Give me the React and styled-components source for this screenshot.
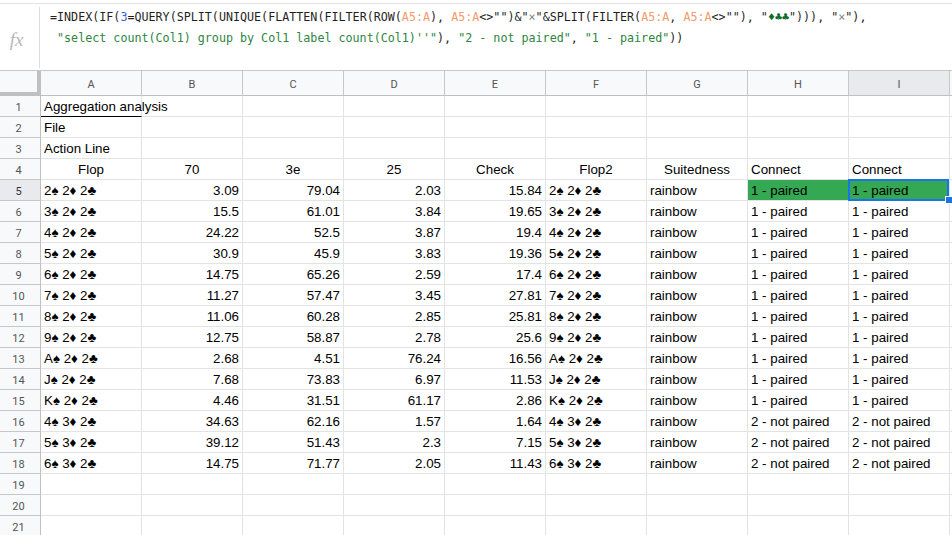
import React from "react";
import styled, { createGlobalStyle } from "styled-components";

const GlobalStyle = createGlobalStyle`
  html, body {
    margin: 0;
    padding: 0;
    background: #fff;
    overflow: hidden;
  }
  body {
    font-family: "Liberation Sans", Arial, sans-serif;
  }
`;

const Page = styled.div`
  width: 952px;
  height: 535px;
  overflow: hidden;
  display: flex;
  flex-direction: column;
  padding-top: 3px;
  box-sizing: border-box;
`;

const FormulaBar = styled.div`
  display: flex;
  height: 68px;
  box-sizing: border-box;
  border-top: 1px solid #e3e3e3;
  border-bottom: 1px solid #c7c7c7;
  flex-shrink: 0;
`;

const FxBox = styled.div`
  width: 40px;
  display: flex;
  align-items: center;
  justify-content: center;
  box-sizing: border-box;
  margin: 3px 0 2px;
  border-right: 1px solid #dadce0;
  font-family: "Liberation Serif", "DejaVu Serif", serif;
  font-style: italic;
  font-size: 19px;
  color: #b5b8bb;
  padding-right: 6px;
  padding-top: 4px;
`;

const FormulaText = styled.div`
  padding: 3px 0 0 10px;
  font-family: "DejaVu Sans Mono", "Liberation Mono", monospace;
  font-size: 11.7px;
  line-height: 21px;
  color: #1f1f1f;
  white-space: pre;
`;

const Tok = styled.span`
  color: ${(p) =>
    p.$kind === "range"
      ? "#f29a6a"
      : p.$kind === "num"
      ? "#3b5bdb"
      : p.$kind === "str"
      ? "#2e8540"
      : p.$kind === "sym"
      ? "#7a8a7e"
      : p.$kind === "suit"
      ? "#0d6b2a"
      : "inherit"};
`;

const Sheet = styled.div`
  display: grid;
  grid-template-columns: 41px repeat(9, 101px) 1fr;
  grid-auto-rows: 21px;
  grid-template-rows: 25px;
`;

const Corner = styled.div`
  background: #f8f9fa;
  box-sizing: border-box;
  border-right: 4px solid #c0c0c0;
  border-bottom: 4px solid #c0c0c0;
`;

const ColHead = styled.div`
  background: ${(p) => (p.$active ? "#e8eaed" : "#f8f9fa")};
  box-sizing: border-box;
  border-right: 1px solid #c7c7c7;
  border-bottom: 1px solid #c0c0c0;
  display: flex;
  align-items: center;
  justify-content: center;
  font-family: Roboto, "Liberation Sans", sans-serif;
  font-size: 11px;
  color: #555;
  padding-top: 2px;
`;

const RowHead = styled.div`
  background: ${(p) => (p.$active ? "#e8eaed" : "#f8f9fa")};
  box-sizing: border-box;
  border-right: 1px solid #c0c0c0;
  border-bottom: 1px solid #c7c7c7;
  display: flex;
  align-items: center;
  justify-content: center;
  font-family: Roboto, "Liberation Sans", sans-serif;
  font-size: 11px;
  color: ${(p) => (p.$active ? "#333" : "#555")};
  padding: 2px 3px 0 0;
`;

const Cell = styled.div`
  position: relative;
  z-index: ${(p) => (p.$spill ? 1 : "auto")};
  box-sizing: border-box;
  border-right: 1px solid #e2e3e3;
  border-bottom: 1px solid ${(p) => (p.$underline ? "#000" : "#e2e3e3")};
  background: ${(p) => p.$bg || "#fff"};
  padding: 1px 3px 0;
  font-size: 10pt;
  line-height: 20px;
  color: #000;
  white-space: nowrap;
  overflow: visible;
  text-align: ${(p) => p.$align || "left"};

  ${(p) =>
    p.$selected &&
    `
    &::after {
      content: "";
      position: absolute;
      top: -1px;
      left: -1px;
      right: 0;
      bottom: -1px;
      border: 2px solid #1a73e8;
      pointer-events: none;
    }
    &::before {
      content: "";
      position: absolute;
      right: -4px;
      bottom: -4px;
      width: 6px;
      height: 6px;
      background: #1a73e8;
      border: 1px solid #fff;
      z-index: 2;
    }
  `}
`;

const Edge = styled.div`
  box-sizing: border-box;
  border-bottom: 1px solid #e2e3e3;
  background: #fff;
`;

const HeadEdge = styled.div`
  background: #f8f9fa;
  border-bottom: 1px solid #c0c0c0;
`;

const cols = ["A", "B", "C", "D", "E", "F", "G", "H", "I"];

const flops = [
  ["2♠ 2♦ 2♣", "3.09", "79.04", "2.03", "15.84"],
  ["3♠ 2♦ 2♣", "15.5", "61.01", "3.84", "19.65"],
  ["4♠ 2♦ 2♣", "24.22", "52.5", "3.87", "19.4"],
  ["5♠ 2♦ 2♣", "30.9", "45.9", "3.83", "19.36"],
  ["6♠ 2♦ 2♣", "14.75", "65.26", "2.59", "17.4"],
  ["7♠ 2♦ 2♣", "11.27", "57.47", "3.45", "27.81"],
  ["8♠ 2♦ 2♣", "11.06", "60.28", "2.85", "25.81"],
  ["9♠ 2♦ 2♣", "12.75", "58.87", "2.78", "25.6"],
  ["A♠ 2♦ 2♣", "2.68", "4.51", "76.24", "16.56"],
  ["J♠ 2♦ 2♣", "7.68", "73.83", "6.97", "11.53"],
  ["K♠ 2♦ 2♣", "4.46", "31.51", "61.17", "2.86"],
  ["4♠ 3♦ 2♣", "34.63", "62.16", "1.57", "1.64"],
  ["5♠ 3♦ 2♣", "39.12", "51.43", "2.3", "7.15"],
  ["6♠ 3♦ 2♣", "14.75", "71.77", "2.05", "11.43"],
];

const buildRows = () => {
  const rows = [
    [{ v: "Aggregation analysis", underline: true, spill: true }],
    [{ v: "File" }],
    [{ v: "Action Line" }],
    [
      { v: "Flop", align: "center" },
      { v: "70", align: "center" },
      { v: "3e", align: "center" },
      { v: "25", align: "center" },
      { v: "Check", align: "center" },
      { v: "Flop2", align: "center" },
      { v: "Suitedness", align: "center" },
      { v: "Connect" },
      { v: "Connect" },
    ],
  ];
  flops.forEach((f) => {
    const paired = f[0].indexOf("3♦") === -1;
    const conn = paired ? "1 - paired" : "2 - not paired";
    rows.push([
      { v: f[0] },
      { v: f[1], align: "right" },
      { v: f[2], align: "right" },
      { v: f[3], align: "right" },
      { v: f[4], align: "right" },
      { v: f[0] },
      { v: "rainbow" },
      { v: conn },
      { v: conn },
    ]);
  });
  rows.push([], [], []);
  return rows;
};

const FormulaLine1 = () => (
  <div>
    =INDEX(IF(<Tok $kind="num">3</Tok>=QUERY(SPLIT(UNIQUE(FLATTEN(FILTER(ROW(
    <Tok $kind="range">A5:A</Tok>), <Tok $kind="range">A5:A</Tok>&lt;&gt;"")&amp;"
    <Tok $kind="sym">×</Tok>"&amp;SPLIT(FILTER(<Tok $kind="range">A5:A</Tok>,{" "}
    <Tok $kind="range">A5:A</Tok>&lt;&gt;""), "<Tok $kind="suit">♦♣♣</Tok>"))), "
    <Tok $kind="sym">×</Tok>"),
  </div>
);

const FormulaLine2 = () => (
  <div>
    {" "}
    <Tok $kind="str">"select count(Col1) group by Col1 label count(Col1)''"</Tok>),{" "}
    <Tok $kind="str">"2 - not paired"</Tok>, <Tok $kind="str">"1 - paired"</Tok>))
  </div>
);

export default function App() {
  const rows = buildRows();
  return (
    <>
      <GlobalStyle />
      <Page>
        <FormulaBar>
          <FxBox>fx</FxBox>
          <FormulaText>
            <FormulaLine1 />
            <FormulaLine2 />
          </FormulaText>
        </FormulaBar>
        <Sheet>
          <Corner />
          {cols.map((c) => (
            <ColHead key={c} $active={c === "I"}>
              {c}
            </ColHead>
          ))}
          <HeadEdge />
          {rows.map((r, ri) => (
            <React.Fragment key={ri}>
              <RowHead $active={ri === 4}>{ri + 1}</RowHead>
              {cols.map((c, ci) => {
                const cell = r[ci] || {};
                const green = ri === 4 && ci >= 7;
                return (
                  <Cell
                    key={c}
                    $align={cell.align}
                    $underline={cell.underline}
                    $spill={cell.spill}
                    $bg={green ? "#34a853" : undefined}
                    $selected={ri === 4 && c === "I"}
                  >
                    {cell.v}
                  </Cell>
                );
              })}
              <Edge />
            </React.Fragment>
          ))}
        </Sheet>
      </Page>
    </>
  );
}
